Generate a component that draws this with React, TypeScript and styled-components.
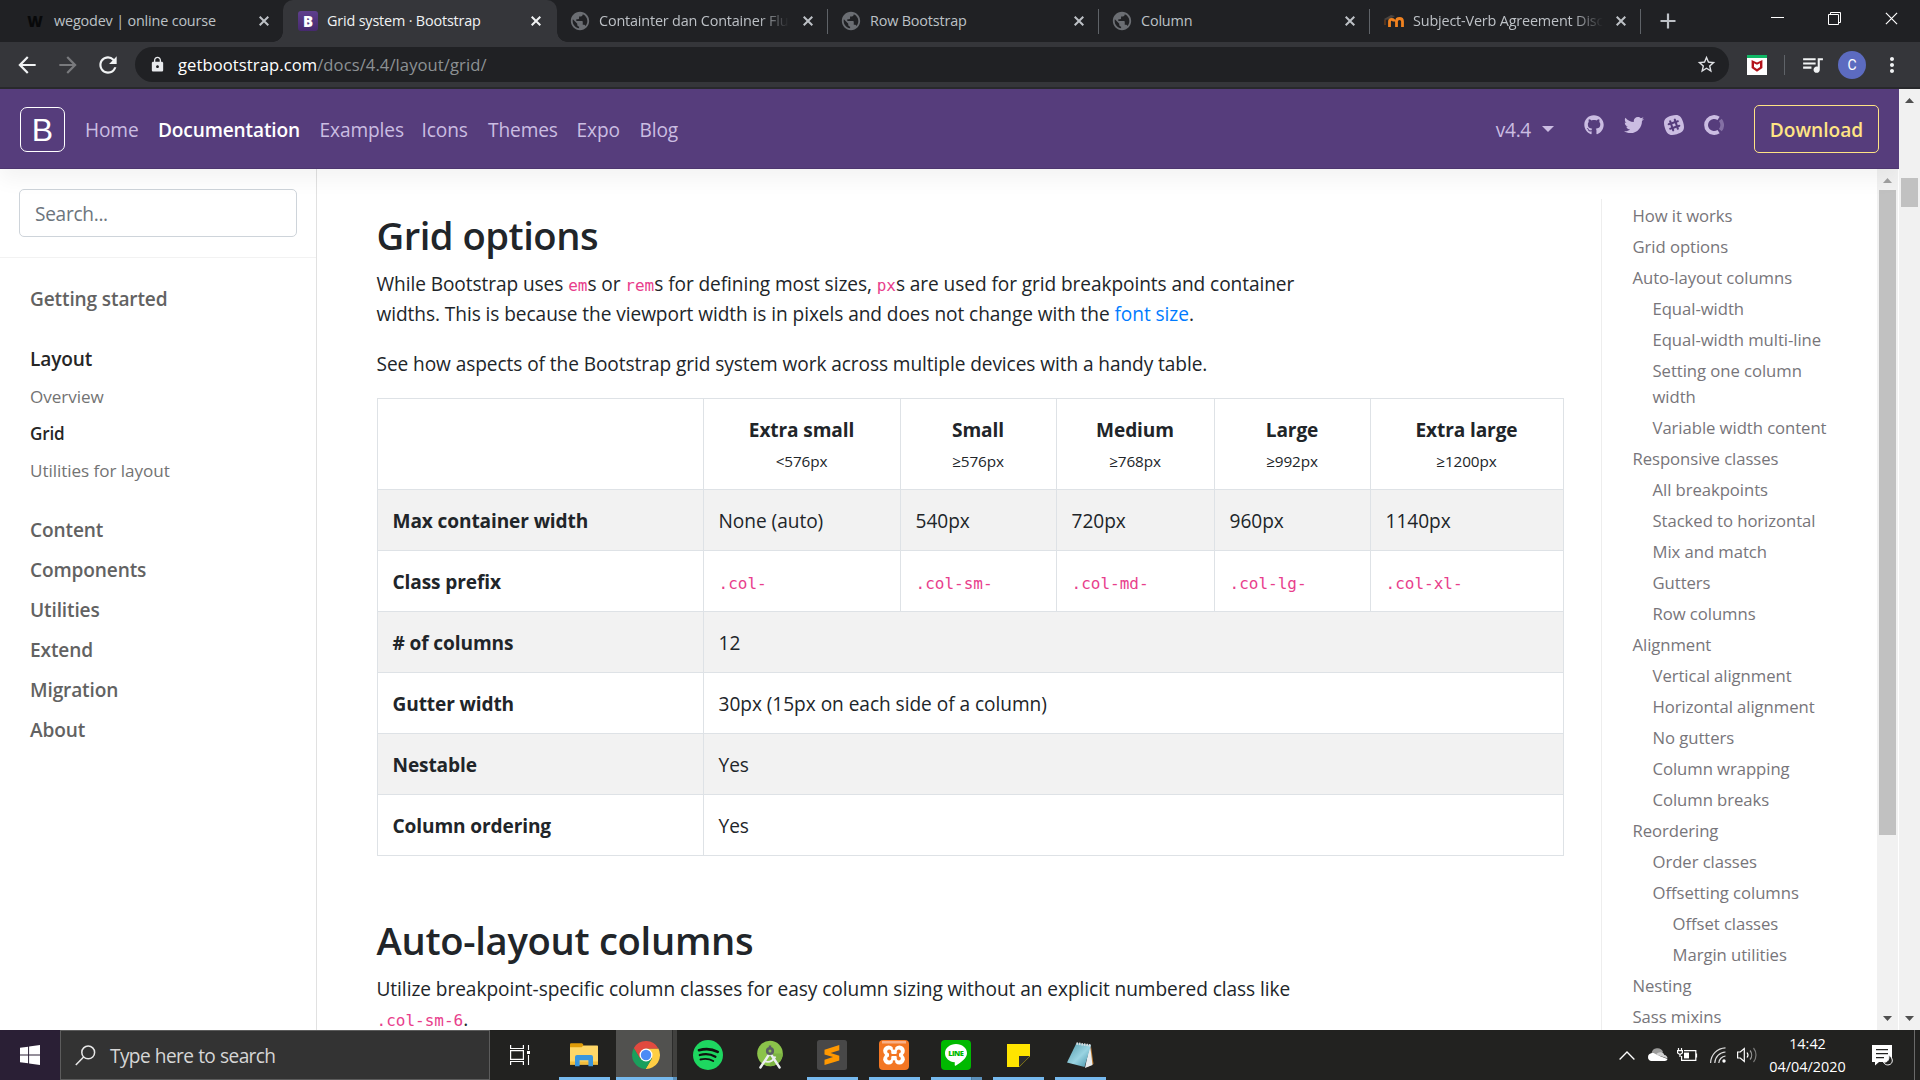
import React from "react";
import styled, { createGlobalStyle, css } from "styled-components";
import {
  MdArrowBack,
  MdArrowForward,
  MdRefresh,
  MdLock,
  MdStarBorder,
  MdPublic,
  MdQueueMusic,
  MdMoreVert,
} from "react-icons/md";
import { FaGithub, FaTwitter } from "react-icons/fa";

const sans = `"Open Sans", "Noto Sans", "Liberation Sans", sans-serif`;
const mono = `"DejaVu Sans Mono", "Liberation Mono", monospace`;

const GlobalStyle = createGlobalStyle`
  *, *::before, *::after { box-sizing: border-box; }
  html, body { margin: 0; padding: 0; background: #fff; overflow: hidden; }
  body { font-family: ${sans}; color: #212529; }
  svg { display: block; flex: none; }
`;

const Screen = styled.div`
  width: 1920px;
  height: 1080px;
  display: flex;
  flex-direction: column;
  overflow: hidden;
`;

const Gap = styled.span<{ $w: number }>`
  width: ${(p) => p.$w}px;
  flex: none;
`;

/* ---------- Browser chrome ---------- */

const TabStrip = styled.div`
  height: 42px;
  flex: none;
  display: flex;
  background: #202124;
`;

const Tab = styled.div<{ $w: number; $active?: boolean; $sep?: boolean; $pad: number }>`
  width: ${(p) => p.$w}px;
  height: 42px;
  flex: none;
  display: flex;
  align-items: center;
  padding-left: ${(p) => p.$pad}px;
  color: ${(p) => (p.$active ? "#f1f3f4" : "#bdc1c6")};
  position: relative;
  ${(p) =>
    p.$sep &&
    css`
      &::after {
        content: "";
        position: absolute;
        right: 0;
        top: 9px;
        width: 1px;
        height: 25px;
        background: #5f6368;
      }
    `}
  ${(p) =>
    p.$active &&
    css`
      background: #35363a;
      border-radius: 10px 10px 0 0;
      z-index: 1;
      &::before,
      &::after {
        content: "";
        position: absolute;
        bottom: 0;
        width: 10px;
        height: 10px;
      }
      &::before {
        left: -10px;
        background: radial-gradient(circle at 0 0, transparent 9.5px, #35363a 10px);
      }
      &::after {
        right: -10px;
        background: radial-gradient(circle at 100% 0, transparent 9.5px, #35363a 10px);
      }
    `}
`;

const Favicon = styled.div`
  width: 20px;
  height: 20px;
  flex: none;
  display: flex;
  align-items: center;
  justify-content: center;
  color: #6b6e73;
`;

const LetterW = styled.span`
  font: 800 15px/20px ${sans};
  color: #08090a;
`;

const LetterB = styled.span`
  width: 20px;
  height: 20px;
  border-radius: 3px;
  background: linear-gradient(#5f3f8e, #46296e);
  color: #fff;
  font: 800 15px/20px ${sans};
  text-align: center;
`;

const TabTitle = styled.div<{ $w: number; $fade?: boolean }>`
  width: ${(p) => p.$w}px;
  margin-left: 9px;
  margin-right: 1px;
  font-size: 14.4px;
  line-height: 20px;
  letter-spacing: -0.17px;
  white-space: nowrap;
  ${(p) =>
    p.$fade &&
    css`
      mask-image: linear-gradient(to right, #000 84%, transparent 100%);
    `}
`;

const TabClose = styled.div`
  display: flex;
  color: inherit;
`;

const NewTab = styled.div`
  width: 54px;
  display: flex;
  align-items: center;
  justify-content: center;
  color: #bdc1c6;
`;

const WindowButtons = styled.div`
  margin-left: auto;
  height: 37px;
  display: flex;
  align-items: center;
  color: #fff;
`;

const WindowButton = styled.div`
  width: 57px;
  display: flex;
  justify-content: center;
`;

const Toolbar = styled.div`
  height: 47px;
  flex: none;
  display: flex;
  align-items: center;
  padding: 0 14px 0 14px;
  background: #35363a;
  border-bottom: 2px solid #28292c;
  color: #f1f3f4;
`;

const ToolButton = styled.div<{ $w: number; $dim?: boolean }>`
  width: ${(p) => p.$w}px;
  flex: none;
  display: flex;
  color: ${(p) => (p.$dim ? "#797a7d" : "#f1f3f4")};
`;

const Omnibox = styled.div`
  width: 1594px;
  height: 35px;
  flex: none;
  border-radius: 18px;
  background: #202124;
  display: flex;
  align-items: center;
  padding: 0 12px 0 14px;
`;

const Url = styled.div`
  margin: 0 auto 0 12px;
  font-size: 16.6px;
  line-height: 24px;
  color: #fff;
  letter-spacing: 0.08px;
`;

const UrlPath = styled.span`
  color: #8d9194;
`;

const Extension = styled.div`
  width: 20px;
  height: 20px;
  margin-left: 18px;
  background: #fff;
  border-top: 3px solid #10b866;
  display: flex;
  align-items: center;
  justify-content: center;
`;

const ToolDivider = styled.div`
  width: 1px;
  height: 20px;
  margin: 0 15px 0 17px;
  background: #5f6368;
`;

const Avatar = styled.div`
  width: 28px;
  height: 28px;
  margin-left: 13px;
  border-radius: 50%;
  background: #5c6bc0;
  color: #fff;
  font: 400 14px/28px Roboto, ${sans};
  text-align: center;
`;

/* ---------- Page ---------- */

const Viewport = styled.div`
  height: 941px;
  flex: none;
  display: flex;
  overflow: hidden;
`;

const Page = styled.div`
  width: 1899px;
  height: 941px;
  flex: none;
  display: flex;
  flex-direction: column;
  overflow: hidden;
  background: #fff;
`;

const Navbar = styled.header`
  height: 80px;
  flex: none;
  display: flex;
  align-items: center;
  padding: 0 20px;
  background: #563d7c;
  box-shadow: 0 10px 20px rgba(0, 0, 0, 0.05), inset 0 -1px 0 rgba(0, 0, 0, 0.1);
  position: relative;
  z-index: 2;
`;

const Brand = styled.div`
  width: 45px;
  height: 45px;
  border: 1px solid #fff;
  border-radius: 7px;
  color: #fff;
  font: 400 32px/44px "Liberation Sans", sans-serif;
  text-align: center;
`;

const NavLinks = styled.nav`
  display: flex;
  margin-left: 20px;
  padding-top: 2px;
  gap: 20px;
`;

const NavLink = styled.a<{ $active?: boolean; $w: number }>`
  width: ${(p) => p.$w}px;
  font-size: 19.1px;
  line-height: 30px;
  white-space: nowrap;
  letter-spacing: ${(p) => (p.$active ? -0.15 : -0.1)}px;
  color: ${(p) => (p.$active ? "#fff" : "#cbbde2")};
  font-weight: ${(p) => (p.$active ? 600 : 400)};
`;

const NavRight = styled.div`
  margin-left: auto;
  display: flex;
  align-items: center;
  color: #cbbde2;
`;

const Version = styled.div`
  display: flex;
  align-items: center;
  gap: 11px;
  font-size: 19.1px;
  line-height: 30px;
  letter-spacing: -0.3px;
  padding-top: 2px;
  margin-right: 30px;
`;

const Caret = styled.span`
  border: 6px solid transparent;
  border-top-color: #cbbde2;
  border-bottom: 0;
  margin-bottom: 2px;
`;

const Socials = styled.div`
  display: flex;
  gap: 20px;
  margin: 0 30px 8px 0;
`;

const DownloadButton = styled.a`
  width: 125px;
  height: 48px;
  border: 1px solid #ffe484;
  border-radius: 5px;
  color: #ffe484;
  font-size: 19.1px;
  font-weight: 600;
  line-height: 48px;
  text-align: center;
`;

const Body = styled.div`
  flex: 1;
  min-height: 0;
  display: flex;
`;

const Sidebar = styled.aside`
  width: 317px;
  flex: none;
  border-right: 1px solid #e1e1e1;
`;

const SearchBlock = styled.div`
  padding: 20px 19px;
  height: 89px;
  border-bottom: 1px solid #f2f2f2;
`;

const SearchField = styled.div`
  height: 48px;
  border: 1px solid #ced4da;
  border-radius: 5px;
  padding-left: 15px;
  font-size: 19.1px;
  line-height: 49px;
  letter-spacing: -0.3px;
  color: #6c757d;
`;

const SideNav = styled.nav`
  padding: 21px 0 0 30px;
  display: flex;
  flex-direction: column;
`;

const Section = styled.a<{ $active?: boolean }>`
  padding: 5px 0;
  font-size: 19.1px;
  line-height: 30px;
  letter-spacing: -0.14px;
  font-weight: 600;
  color: ${(p) => (p.$active ? "#262626" : "#626262")};
`;

const ActiveGroup = styled.div`
  display: flex;
  flex-direction: column;
  margin: 20px 0;
`;

const SubLink = styled.a<{ $active?: boolean }>`
  padding: 4px 0 6px;
  font-size: 17.1px;
  line-height: 27px;
  font-weight: ${(p) => (p.$active ? 600 : 400)};
  letter-spacing: ${(p) => (p.$active ? -0.2 : -0.05)}px;
  color: ${(p) => (p.$active ? "#262626" : "#737373")};
`;

const Main = styled.main`
  width: 1247px;
  flex: none;
  padding: 42px 0 0 59.5px;
`;

const Heading = styled.h2<{ $ls?: number }>`
  margin: 0 0 10px;
  font-size: 38.2px;
  font-weight: 600;
  line-height: 48px;
  letter-spacing: ${(p) => p.$ls ?? 0}px;
`;

const Paragraph = styled.p`
  width: 940px;
  margin: 0 0 20px;
  font-size: 19.1px;
  line-height: 30px;
`;

const Line = styled.span<{ $ls?: number }>`
  display: block;
  height: 30px;
  white-space: nowrap;
  letter-spacing: ${(p) => p.$ls ?? 0}px;
`;

const Code = styled.code`
  font-family: ${mono};
  font-size: 16px;
  line-height: 16px;
  letter-spacing: 0;
  color: #e83e8c;
`;

const DocLink = styled.a`
  color: #007bff;
`;

const GridTable = styled.table`
  width: 1186px;
  margin: -1px 0 60px;
  table-layout: fixed;
  border-collapse: collapse;
  font-size: 19.1px;
  line-height: 30px;
`;

const Cell = styled.td`
  height: 61px;
  padding: 16px 15px 14px;
  border: 1px solid #dee2e6;
  white-space: nowrap;
  letter-spacing: -0.04px;
`;

const HeadCell = styled.th`
  height: 91px;
  padding: 16px 15px 14px;
  border: 1px solid #dee2e6;
  font-weight: 700;
  letter-spacing: -0.12px;
  text-align: center;
`;

const RowHead = styled.th`
  padding: 16px 15px 14px;
  border: 1px solid #dee2e6;
  font-weight: 700;
  letter-spacing: -0.12px;
  text-align: left;
`;

const Row = styled.tr<{ $striped?: boolean }>`
  background: ${(p) => (p.$striped ? "#f2f2f2" : "#fff")};
`;

const Small = styled.small`
  display: block;
  font-size: 15.3px;
  font-weight: 400;
  padding-top: 1px;
  margin-bottom: -1px;
`;

const Toc = styled.aside`
  width: 276px;
  height: 831px;
  margin: 30px 0 0 37px;
  padding: 2px 0 0 30.5px;
  border-left: 1px solid #eee;
  display: flex;
  flex-direction: column;
  overflow: hidden;
`;

const TocLink = styled.a<{ $level: number }>`
  flex: none;
  width: 225px;
  padding: 2px 20px 3px ${(p) => p.$level * 20}px;
  font-size: 16.7px;
  line-height: 26px;
  letter-spacing: -0.06px;
  color: #77757a;
`;

const ScrollTrack = styled.div<{ $w: number; $h: number }>`
  width: ${(p) => p.$w}px;
  height: ${(p) => p.$h}px;
  flex: none;
  display: flex;
  flex-direction: column;
  align-items: center;
  background: #f1f1f1;
`;

const ScrollArrow = styled.div<{ $down?: boolean; $dim?: boolean }>`
  width: 21px;
  height: 21px;
  flex: none;
  display: flex;
  align-items: center;
  justify-content: center;
  padding-top: 2px;
  color: ${(p) => (p.$dim ? "#a0a0a0" : "#505050")};
  transform: ${(p) => (p.$down ? "rotate(180deg)" : "none")};
`;

const ScrollThumb = styled.div<{ $h: number; $top: number }>`
  width: 17px;
  height: ${(p) => p.$h}px;
  margin: ${(p) => p.$top}px 0 auto;
  background: #c1c1c1;
`;

/* ---------- Taskbar ---------- */

const Taskbar = styled.footer`
  height: 50px;
  flex: none;
  display: flex;
  background: #222220;
  color: #fff;
`;

const StartButton = styled.div`
  width: 60px;
  display: flex;
  align-items: center;
  justify-content: center;
  background: #2a1f35;
`;

const TaskSearch = styled.div`
  width: 430px;
  height: 50px;
  border: 1px solid #5c5c5c;
  background: #333;
  display: flex;
  align-items: center;
  padding: 1px 0 0 14px;
  gap: 14px;
  font-size: 19.1px;
  letter-spacing: 0;
  color: #d6d6d6;
`;

const TaskSearchText = styled.span`
  letter-spacing: -0.6px;
  word-spacing: 0.5px;
  letter-spacing: -0.62px;
`;

const TaskView = styled.div`
  width: 63px;
  display: flex;
  align-items: center;
  padding-left: 20px;
`;

const Apps = styled.div`
  display: flex;
`;

const AppSlot = styled.div<{ $state?: "open" | "active" | "stacked" }>`
  width: 62px;
  height: 50px;
  display: flex;
  align-items: center;
  justify-content: center;
  background-repeat: no-repeat;
  ${(p) =>
    p.$state === "open" &&
    css`
      background-image: linear-gradient(#76b9ed, #76b9ed);
      background-size: 51px 3px;
      background-position: 6px 100%;
    `}
  ${(p) =>
    p.$state === "stacked" &&
    css`
      background-image: linear-gradient(to right, #76b9ed 40px, #40698a 40px, #5a8fb9 41px);
      background-size: 51px 3px;
      background-position: 6px 100%;
    `}
  ${(p) =>
    p.$state === "active" &&
    css`
      background-image: linear-gradient(to right, #76b9ed 57px, #5a8fb9 57px),
        linear-gradient(to right, #51514f 56px, #2c2c2b 56px, #2c2c2b 57px, #41413f 57px);
      background-size: 61px 3px, 61px 50px;
      background-position: 1px 100%, 1px 0;
    `}
`;

const Tray = styled.div`
  margin-left: auto;
  display: flex;
  align-items: center;
`;

const TrayIcons = styled.div`
  display: flex;
  align-items: center;
`;

const TraySlot = styled.div<{ $w: number }>`
  width: ${(p) => p.$w}px;
  display: flex;
  justify-content: center;
`;

const Clock = styled.div`
  width: 91px;
  font-size: 14.4px;
  line-height: 23px;
  text-align: center;
  white-space: nowrap;
`;

const Notice = styled.div`
  width: 61px;
  display: flex;
  padding-left: 19px;
`;

const ShowDesktop = styled.div`
  width: 6px;
  height: 50px;
  border-left: 1px solid #6a6a69;
`;

/* ---------- Drawings ---------- */

const Cross = ({ size = 10, stroke = 2 }: { size?: number; stroke?: number }) => (
  <svg width={size} height={size} viewBox="0 0 10 10">
    <path d="M.7.7l8.6 8.6M9.3.7L.7 9.3" stroke="currentColor" strokeWidth={stroke} />
  </svg>
);

const MoodleIcon = () => (
  <svg width="20" height="14" viewBox="0 0 20 14">
    <path d="M0 5l7-4 4 1-5 3-5 1z" fill="#4a4440" />
    <path d="M5.5 13V7.6c0-3 4.5-3 4.5 0M12.5 13V7.5c0-4 6-4 6 0V13" fill="none" stroke="#f08220" strokeWidth="2.8" />
    <path d="M1 6v5" stroke="#6b3c1a" strokeWidth="1.5" />
  </svg>
);

const McAfee = () => (
  <svg width="12" height="12" viewBox="0 0 12 12">
    <path d="M.6 0L6 2.6 11.4 0v8L6 11.8.6 8z" fill="#b3131b" />
    <path d="M3 3.3l3 1.5 3-1.5V7L6 9 3 7z" fill="#fff" />
  </svg>
);

const Slack = () => (
  <svg width="20" height="20" viewBox="0 0 512 512" fill="currentColor">
    <path d="M210.787 234.832l68.31-22.883 22.1 65.977-68.309 22.882z" />
    <path d="M490.54 185.6C437.7 9.59 361.6-31.34 185.6 21.46S-31.3 150.4 21.46 326.4 150.4 543.3 326.4 490.54 543.34 361.6 490.54 185.6zM401.7 299.8l-33.15 11.05 11.46 34.38c4.5 13.92-2.87 29.06-16.78 33.56-2.87.82-6.14 1.64-9 1.23a27.32 27.32 0 0 1-24.56-18l-11.46-34.38-68.36 22.92 11.46 34.38c4.5 13.92-2.87 29.06-16.78 33.56-2.87.82-6.14 1.64-9 1.23a27.32 27.32 0 0 1-24.56-18l-11.46-34.43-33.15 11.05c-2.87.82-6.14 1.64-9 1.23a27.32 27.32 0 0 1-24.56-18c-4.5-13.92 2.87-29.06 16.78-33.56l33.12-11.03-22.1-65.9-33.15 11.05c-2.87.82-6.14 1.64-9 1.23a27.32 27.32 0 0 1-24.56-18c-4.48-13.93 2.89-29.07 16.81-33.58l33.15-11.05-11.46-34.38c-4.5-13.92 2.87-29.06 16.78-33.56s29.06 2.87 33.56 16.78l11.46 34.38 68.36-22.92-11.46-34.38c-4.5-13.92 2.87-29.06 16.78-33.56s29.06 2.87 33.56 16.78l11.47 34.42 33.15-11.05c13.92-4.5 29.06 2.87 33.56 16.78s-2.87 29.06-16.78 33.56L329.7 194.6l22.1 65.9 33.15-11.05c13.92-4.5 29.06 2.87 33.56 16.78s-2.88 29.07-16.81 33.57z" />
  </svg>
);

const OpenCollective = () => (
  <svg width="20" height="20" viewBox="0 0 20 20" fill="none" stroke="currentColor" strokeWidth="3.8">
    <path d="M14.6 3.4a8 8 0 1 0 0 13.2" />
    <path d="M16.3 4.9a8 8 0 0 1 0 10.2" opacity=".4" />
  </svg>
);

const Triangle = () => (
  <svg width="9" height="5" viewBox="0 0 9 5">
    <path d="M0 5L4.5 0 9 5z" fill="currentColor" />
  </svg>
);

const WindowsLogo = () => (
  <svg width="20" height="20" viewBox="0 0 20 20" fill="#fff">
    <path d="M0 2.8L8.1 1.7v7.7H0zM9.1 1.5L20 0v9.4H9.1zM0 10.5h8.1v7.8L0 17.2zM9.1 10.5H20V20L9.1 18.4z" />
  </svg>
);

const Magnifier = () => (
  <svg width="21" height="21" viewBox="0 0 21 21" fill="none" stroke="#e8e8e8" strokeWidth="1.5">
    <circle cx="13.2" cy="7.4" r="6.4" />
    <path d="M8.6 12L.8 20" />
  </svg>
);

const TaskViewIcon = () => (
  <svg width="21" height="20" viewBox="0 0 21 20" fill="none" stroke="#fff">
    <path d="M.6 0v3.500h12.800V0M.6 20v-3.500h12.800V20M.6 5.600h12.800v8.800H.6z" strokeWidth="1.2" />
    <path d="M18.500 0v5M18.500 10v10" strokeWidth="1.1" />
    <path d="M17 6h3v3h-3z" fill="#fff" stroke="none" />
  </svg>
);

const Explorer = () => (
  <svg width="28" height="24" viewBox="0 0 28 24">
    <path d="M0 1.5C0 .7.6.3 1.3.3h10.4c.8 0 1.6 1 1.6 2.2V5H0z" fill="#e09c08" />
    <path d="M0 4.2h11.5l2-1.7H27c.6 0 1 .4 1 1v18H0z" fill="#ffd767" />
    <path d="M0 18.5h28v3.2H0z" fill="#f2bd3c" />
    <path d="M5 23.2V14a2 2 0 0 1 2-2h14a2 2 0 0 1 2 2v9.2h-4.6v-6H9.6v6z" fill="#3a96dd" />
  </svg>
);

const Chrome = () => (
  <svg width="28" height="28" viewBox="0 0 28 28">
    <path d="M14 7.5h12.4A14 14 0 0 1 13.6 28l6.2-10.5z" fill="#ffce44" />
    <path d="M1.9 7A14 14 0 0 0 13.6 28l6.2-10.6L8.3 17.5z" fill="#1a9f5c" />
    <path d="M14 7.5h12.3A14 14 0 0 0 1.9 7l6.3 10.6z" fill="#e04a3f" />
    <circle cx="14" cy="14" r="6.5" fill="#fff" />
    <circle cx="14" cy="14" r="5.2" fill="#4c8bf5" />
  </svg>
);

const Spotify = () => (
  <svg width="30" height="30" viewBox="0 0 30 30" fill="none" stroke="#10120f" strokeLinecap="round">
    <circle cx="15" cy="15" r="15" fill="#1ed760" stroke="none" />
    <path d="M6 10.2c6.5-1.9 13.5-1.2 18.7 1.7" strokeWidth="2.7" />
    <path d="M6.8 15c5.500-1.500 11.200-.9 15.600 1.700" strokeWidth="2.3" />
    <path d="M7.500 19.500c4.500-1.200 9-.7 12.700 1.500" strokeWidth="1.9" />
  </svg>
);

const AndroidStudio = () => (
  <svg width="26" height="30" viewBox="0 0 26 30">
    <circle cx="13" cy="13.5" r="12.8" fill="#8bc34a" />
    <path d="M13 13.500h12.800a12.800 12.800 0 0 1-12.800 12.800z" fill="#7cb342" />
    <path d="M12.300 14L3.400 27.500M13.700 14l8.900 13.500" stroke="#eceff1" strokeWidth="2.400" strokeLinecap="round" />
    <path d="M7 21c4 1.800 8.500.5 11.500-4.500" fill="none" stroke="#eceff1" strokeWidth="1.800" />
    <circle cx="13" cy="11" r="2.8" fill="#8bc34a" stroke="#5a5f62" strokeWidth="2.600" />
    <path d="M11.800 5.500h2.400v3h-2.400z" fill="#5a5f62" />
  </svg>
);

const Sublime = () => (
  <svg width="30" height="30" viewBox="0 0 30 30">
    <rect width="30" height="30" rx="2.5" fill="#484848" />
    <path d="M7.500 9.800L22.300 5v5.300L13.600 13l8.700 2.800v4.600L7.500 25v-5.300l8.500-2.700-8.500-2.500z" fill="#ff9800" />
  </svg>
);

const Xampp = () => (
  <svg width="30" height="30" viewBox="0 0 30 30">
    <rect width="30" height="30" rx="4" fill="#f37623" />
    <path d="M3 1h24v2.500H3z" fill="#f8b088" />
    <g fill="#fff">
      <circle cx="9.6" cy="10.800" r="5.400" />
      <circle cx="20.400" cy="10.800" r="5.400" />
      <circle cx="9.600" cy="19.200" r="5.400" />
      <circle cx="20.400" cy="19.200" r="5.400" />
      <path d="M6 10h18v10H6z" />
    </g>
    <g fill="#f37623">
      <circle cx="10.200" cy="11.400" r="2" />
      <circle cx="19.800" cy="11.400" r="2" />
      <circle cx="10.200" cy="18.600" r="2" />
      <circle cx="19.800" cy="18.600" r="2" />
      <path d="M10 12.500h2.500v1.500h5v-1.500H20v5h-2.500V16h-5v1.500H10z" />
      <path d="M13.800 5h2.400v4.500h-2.400zM13.800 20.500h2.400V25h-2.400z" />
    </g>
  </svg>
);

const LineText = styled.text`
  font: 800 7.5px ${sans};
`;

const LineApp = () => (
  <svg width="30" height="30" viewBox="0 0 30 30">
    <rect width="30" height="30" rx="4" fill="#00b900" />
    <path d="M15 4c6.100 0 11 4.100 11 9.200 0 5-6 9-11 12.300-1.300.8-1.400-.1-1.200-3.200C8.200 21.800 4 18 4 13.200 4 8.100 8.900 4 15 4z" fill="#fff" />
    <LineText x="15" y="16.3" textAnchor="middle" textLength="15.5" fill="#00b900">
      LINE
    </LineText>
  </svg>
);

const Sticky = () => (
  <svg width="23" height="23" viewBox="0 0 23 23">
    <path d="M0 0h23v12.300L12.300 23H0z" fill="#ffe400" />
    <path d="M12 12h11L12 23z" fill="#2b2b2b" />
  </svg>
);

const Notepad = () => (
  <svg width="28" height="27" viewBox="0 0 28 27">
    <defs>
      <linearGradient id="np" x1="0" y1="0" x2="1" y2="1">
        <stop offset="0" stopColor="#4f97a8" />
        <stop offset=".55" stopColor="#9ad4e2" />
        <stop offset="1" stopColor="#3f8ea5" />
      </linearGradient>
    </defs>
    <path d="M25 4l2.500 18-6 3z" fill="#b9772a" />
    <path d="M24 2l2.500 21-7.500 3z" fill="#e8ecee" />
    <path d="M10.500 1L25 3l-6.500 22L1 20.500z" fill="url(#np)" />
    <path d="M10.500 1.500L25 3.500" stroke="#d9dde0" strokeWidth="2.5" strokeDasharray="1.5 1" />
  </svg>
);

const CloudIcon = () => (
  <svg width="21" height="14" viewBox="0 0 21 14">
    <path d="M4.500 5.500A6 6 0 0 1 16 4l-6 6z" fill="#9b9b9a" />
    <path d="M9 6.500c1.500-2 4-2.800 6-2 1.300.5 2 1.300 2.300 2.400 2 .1 3.300 1.800 3.200 3.600z" fill="#d0d0d0" />
    <path d="M4 13a4 4 0 0 1 .3-7.800C6 4.700 8 5.500 9.500 6.700L20.500 11c-.3 1.200-1.300 2-2.700 2z" fill="#fff" />
  </svg>
);

const BatteryIcon = () => (
  <svg width="21" height="14" viewBox="0 0 21 14" fill="none" stroke="#fff" strokeWidth="1.2">
    <path d="M7 2.600h11.800v9.800H4.600V8" />
    <path d="M19.500 5.500v4" />
    <path d="M1.500 0v2M4.500 0v2M.6 2.600h4.800V5L3 6.500.6 5zM3 6.500V9" />
    <path d="M7 4.600h5v5.800H7z" fill="#fff" stroke="none" />
  </svg>
);

const WifiIcon = () => (
  <svg width="16" height="16" viewBox="0 0 16 16" fill="none" stroke="#fff" strokeWidth="1.2">
    <path d="M.6 16A15.500 15.500 0 0 1 15.500.8M4.800 16A11.300 11.300 0 0 1 15.500 5M8.800 16a7.500 7.500 0 0 1 6.700-7" opacity=".85" />
    <circle cx="14" cy="14" r="1.7" fill="#fff" stroke="none" />
  </svg>
);

const SpeakerIcon = () => (
  <svg width="21" height="18" viewBox="0 0 21 18" fill="none" stroke="#fff" strokeWidth="1.2">
    <path d="M.6 6h2.700l4-3.500v13l-4-3.500H.6z" />
    <path d="M10 6.500c1.200 1.500 1.200 3.500 0 5" />
    <path d="M13 4.500c2.200 2.600 2.200 6.400 0 9" opacity=".55" />
    <path d="M16.500 2c3.300 4 3.300 10 0 14" opacity=".4" />
  </svg>
);

const NoticeIcon = () => (
  <svg width="21" height="21" viewBox="0 0 21 21">
    <path d="M0 0h20v17H7l-4 3.500V17H0z" fill="#fff" />
    <path d="M4 4.600h12M4 8.600h12M4 12.600h8" stroke="#222220" strokeWidth="1.2" />
    <path d="M16.500 10.500c1.300 4-1 7-5 6.700 1.500 3.500 7 3.800 8.500 0 1-2.800-.8-6-3.500-6.700z" fill="#222220" stroke="#fff" />
  </svg>
);

/* ---------- Data ---------- */

const navItems = [
  { label: "Home", w: 53 },
  { label: "Documentation", w: 141.5, active: true },
  { label: "Examples", w: 82 },
  { label: "Icons", w: 46.5 },
  { label: "Themes", w: 68.5 },
  { label: "Expo", w: 43 },
  { label: "Blog", w: 40 },
];

const toc: [string, number][] = [
  ["How it works", 0],
  ["Grid options", 0],
  ["Auto-layout columns", 0],
  ["Equal-width", 1],
  ["Equal-width multi-line", 1],
  ["Setting one column width", 1],
  ["Variable width content", 1],
  ["Responsive classes", 0],
  ["All breakpoints", 1],
  ["Stacked to horizontal", 1],
  ["Mix and match", 1],
  ["Gutters", 1],
  ["Row columns", 1],
  ["Alignment", 0],
  ["Vertical alignment", 1],
  ["Horizontal alignment", 1],
  ["No gutters", 1],
  ["Column wrapping", 1],
  ["Column breaks", 1],
  ["Reordering", 0],
  ["Order classes", 1],
  ["Offsetting columns", 1],
  ["Offset classes", 2],
  ["Margin utilities", 2],
  ["Nesting", 0],
  ["Sass mixins", 0],
];

const breakpoints = [
  { name: "Extra small", size: "<576px", max: "None (auto)", prefix: ".col-" },
  { name: "Small", size: "≥576px", max: "540px", prefix: ".col-sm-" },
  { name: "Medium", size: "≥768px", max: "720px", prefix: ".col-md-" },
  { name: "Large", size: "≥992px", max: "960px", prefix: ".col-lg-" },
  { name: "Extra large", size: "≥1200px", max: "1140px", prefix: ".col-xl-" },
];

const wideRows = [
  ["# of columns", "12"],
  ["Gutter width", "30px (15px on each side of a column)"],
  ["Nestable", "Yes"],
  ["Column ordering", "Yes"],
];

const columnWidths = [326, 197, 156, 158, 156, 193];

export default function App() {
  return (
    <Screen>
      <GlobalStyle />
      <TabStrip>
        <Tab $w={283} $pad={25}>
          <Favicon><LetterW>W</LetterW></Favicon>
          <TabTitle $w={204}>wegodev | online course</TabTitle>
          <TabClose><Cross /></TabClose>
        </Tab>
        <Tab $w={274} $pad={15} $active>
          <Favicon><LetterB>B</LetterB></Favicon>
          <TabTitle $w={203}>Grid system · Bootstrap</TabTitle>
          <TabClose><Cross /></TabClose>
        </Tab>
        <Tab $w={271} $pad={13} $sep>
          <Favicon><MdPublic size={22} /></Favicon>
          <TabTitle $w={190} $fade>Containter dan Container Flu</TabTitle>
          <TabClose><Gap $w={13} /><Cross /></TabClose>
        </Tab>
        <Tab $w={271} $pad={13} $sep>
          <Favicon><MdPublic size={22} /></Favicon>
          <TabTitle $w={203}>Row Bootstrap</TabTitle>
          <TabClose><Cross /></TabClose>
        </Tab>
        <Tab $w={271} $pad={13} $sep>
          <Favicon><MdPublic size={22} /></Favicon>
          <TabTitle $w={203}>Column</TabTitle>
          <TabClose><Cross /></TabClose>
        </Tab>
        <Tab $w={271} $pad={14} $sep>
          <Favicon><MoodleIcon /></Favicon>
          <TabTitle $w={190} $fade>Subject-Verb Agreement Disc</TabTitle>
          <TabClose><Gap $w={12} /><Cross /></TabClose>
        </Tab>
        <NewTab>
          <svg width="16" height="16" viewBox="0 0 16 16">
            <path d="M8 .5v15M.5 8h15" stroke="currentColor" strokeWidth="2.2" />
          </svg>
        </NewTab>
        <WindowButtons>
          <WindowButton>
            <svg width="13" height="13" viewBox="0 0 13 13"><path d="M0 5.500h13" stroke="#fff" /></svg>
          </WindowButton>
          <WindowButton>
            <svg width="13" height="13" viewBox="0 0 13 13" fill="none" stroke="#fff">
              <path d="M.5 2.500h10v10H.5zM2.500 2.500v-2h10v10h-2" />
            </svg>
          </WindowButton>
          <WindowButton><Cross size={13} stroke={0.9} /></WindowButton>
        </WindowButtons>
      </TabStrip>

      <Toolbar>
        <ToolButton $w={41}><MdArrowBack size={26} /></ToolButton>
        <ToolButton $w={40} $dim><MdArrowForward size={26} /></ToolButton>
        <ToolButton $w={40}><MdRefresh size={26} /></ToolButton>
        <Omnibox>
          <MdLock size={17} color="#e8eaed" />
          <Url>
            getbootstrap.com<UrlPath>/docs/4.4/layout/grid/</UrlPath>
          </Url>
          <MdStarBorder size={21} color="#dfe1e5" />
        </Omnibox>
        <Extension><McAfee /></Extension>
        <ToolDivider />
        <MdQueueMusic size={25} />
        <Avatar>C</Avatar>
        <Gap $w={14} />
        <MdMoreVert size={24} />
      </Toolbar>

      <Viewport>
        <Page>
          <Navbar>
            <Brand>B</Brand>
            <NavLinks>
              {navItems.map((n) => (
                <NavLink key={n.label} $w={n.w} $active={n.active}>{n.label}</NavLink>
              ))}
            </NavLinks>
            <NavRight>
              <Version>v4.4<Caret /></Version>
              <Socials>
                <FaGithub size={20} />
                <FaTwitter size={20} />
                <Slack />
                <OpenCollective />
              </Socials>
              <DownloadButton>Download</DownloadButton>
            </NavRight>
          </Navbar>
          <Body>
            <Sidebar>
              <SearchBlock><SearchField>Search...</SearchField></SearchBlock>
              <SideNav>
                <Section>Getting started</Section>
                <ActiveGroup>
                  <Section $active>Layout</Section>
                  <SubLink>Overview</SubLink>
                  <SubLink $active>Grid</SubLink>
                  <SubLink>Utilities for layout</SubLink>
                </ActiveGroup>
                {["Content", "Components", "Utilities", "Extend", "Migration", "About"].map((s) => (
                  <Section key={s}>{s}</Section>
                ))}
              </SideNav>
            </Sidebar>
            <Main>
              <Heading $ls={-0.5}>Grid options</Heading>
              <Paragraph>
                <Line $ls={-0.08}>
                  While Bootstrap uses <Code>em</Code>s or <Code>rem</Code>s for defining most sizes, <Code>px</Code>s are used for grid breakpoints and container
                </Line>
                <Line $ls={-0.07}>
                  widths. This is because the viewport width is in pixels and does not change with the <DocLink>font size</DocLink>.
                </Line>
              </Paragraph>
              <Paragraph>
                <Line $ls={-0.08}>See how aspects of the Bootstrap grid system work across multiple devices with a handy table.</Line>
              </Paragraph>
              <GridTable>
                <colgroup>
                  {columnWidths.map((w, i) => (
                    <col key={i} width={w} />
                  ))}
                </colgroup>
                <thead>
                  <Row>
                    <HeadCell />
                    {breakpoints.map((b) => (
                      <HeadCell key={b.name}>
                        {b.name}
                        <Small>{b.size}</Small>
                      </HeadCell>
                    ))}
                  </Row>
                </thead>
                <tbody>
                  <Row $striped>
                    <RowHead>Max container width</RowHead>
                    {breakpoints.map((b) => <Cell key={b.name}>{b.max}</Cell>)}
                  </Row>
                  <Row>
                    <RowHead>Class prefix</RowHead>
                    {breakpoints.map((b) => <Cell key={b.name}><Code>{b.prefix}</Code></Cell>)}
                  </Row>
                  {wideRows.map(([k, v], i) => (
                    <Row key={k} $striped={i % 2 === 0}>
                      <RowHead>{k}</RowHead>
                      <Cell colSpan={5}>{v}</Cell>
                    </Row>
                  ))}
                </tbody>
              </GridTable>
              <Heading $ls={-0.3}>Auto-layout columns</Heading>
              <Paragraph>
                <Line $ls={-0.06}>Utilize breakpoint-specific column classes for easy column sizing without an explicit numbered class like</Line>
                <Line><Code>.col-sm-6</Code>.</Line>
              </Paragraph>
            </Main>
            <Toc>
              {toc.map(([label, level]) => (
                <TocLink key={label} $level={level}>{label}</TocLink>
              ))}
            </Toc>
            <ScrollTrack $w={21} $h={861}>
              <ScrollArrow $dim><Triangle /></ScrollArrow>
              <ScrollThumb $h={645} $top={0} />
              <ScrollArrow $down><Triangle /></ScrollArrow>
            </ScrollTrack>
          </Body>
        </Page>
        <ScrollTrack $w={21} $h={941}>
          <ScrollArrow><Triangle /></ScrollArrow>
          <ScrollThumb $h={29} $top={68} />
          <ScrollArrow $down><Triangle /></ScrollArrow>
        </ScrollTrack>
      </Viewport>

      <Taskbar>
        <StartButton><WindowsLogo /></StartButton>
        <TaskSearch><Magnifier /><TaskSearchText>Type here to search</TaskSearchText></TaskSearch>
        <TaskView><TaskViewIcon /></TaskView>
        <Apps>
          <AppSlot $state="open"><Explorer /></AppSlot>
          <AppSlot $state="active"><Chrome /></AppSlot>
          <AppSlot><Spotify /></AppSlot>
          <AppSlot><AndroidStudio /></AppSlot>
          <AppSlot $state="open"><Sublime /></AppSlot>
          <AppSlot $state="open"><Xampp /></AppSlot>
          <AppSlot $state="stacked"><LineApp /></AppSlot>
          <AppSlot $state="open"><Sticky /></AppSlot>
          <AppSlot $state="open"><Notepad /></AppSlot>
        </Apps>
        <Tray>
          <TrayIcons>
            <TraySlot $w={30}>
              <svg width="16" height="9" viewBox="0 0 16 9"><path d="M.6 8.500L8 1l7.400 7.500" fill="none" stroke="#fff" strokeWidth="1.3" /></svg>
            </TraySlot>
            <TraySlot $w={30}><CloudIcon /></TraySlot>
            <TraySlot $w={30}><BatteryIcon /></TraySlot>
            <TraySlot $w={31}><WifiIcon /></TraySlot>
            <TraySlot $w={29}><SpeakerIcon /></TraySlot>
          </TrayIcons>
          <Clock>14:42<br />04/04/2020</Clock>
          <Notice><NoticeIcon /></Notice>
          <ShowDesktop />
        </Tray>
      </Taskbar>
    </Screen>
  );
}
